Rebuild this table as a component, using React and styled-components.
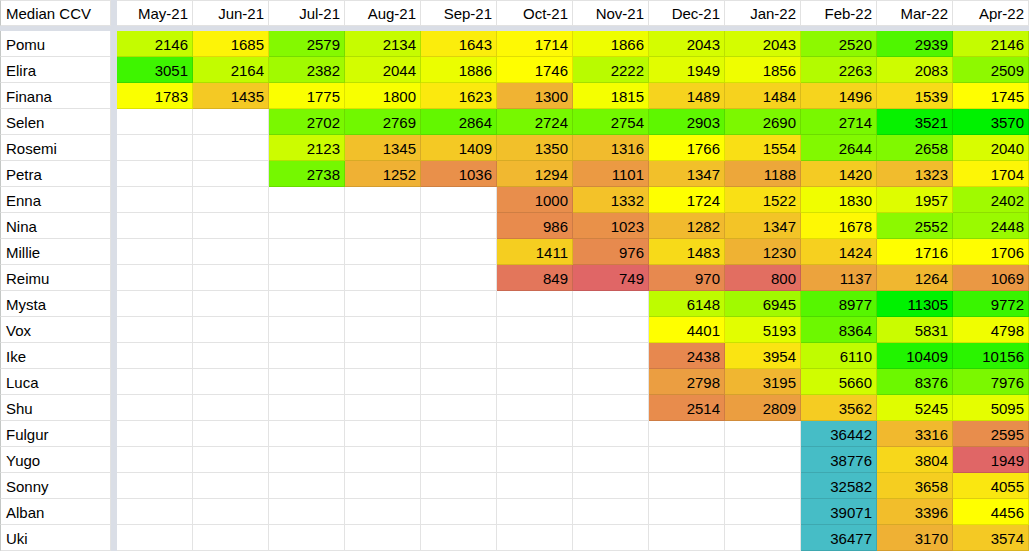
import React from "react";
import styled, { createGlobalStyle } from "styled-components";

const GlobalStyle = createGlobalStyle`
  html, body {
    margin: 0;
    padding: 0;
    background: #ffffff;
    overflow: hidden;
  }
  body {
    font-family: "Liberation Sans", Arial, sans-serif;
  }
`;

const MONTHS = [
  "May-21", "Jun-21", "Jul-21", "Aug-21", "Sep-21", "Oct-21",
  "Nov-21", "Dec-21", "Jan-22", "Feb-22", "Mar-22", "Apr-22",
];

// each wave has its own colour scale: value at red, at yellow, at green
const SCALES = {
  w1: [850, 1750, 3470],
  w2: [760, 1760, 3570],
  w3: [749, 1720, 3560],
  w4: [1880, 4401, 11305],
  w5: [1949, 4456, 9000],
};

const ROWS = [
  { name: "Pomu", wave: "w1", start: 0, values: [2146, 1685, 2579, 2134, 1643, 1714, 1866, 2043, 2043, 2520, 2939, 2146] },
  { name: "Elira", wave: "w1", start: 0, values: [3051, 2164, 2382, 2044, 1886, 1746, 2222, 1949, 1856, 2263, 2083, 2509] },
  { name: "Finana", wave: "w1", start: 0, values: [1783, 1435, 1775, 1800, 1623, 1300, 1815, 1489, 1484, 1496, 1539, 1745] },
  { name: "Selen", wave: "w2", start: 2, values: [2702, 2769, 2864, 2724, 2754, 2903, 2690, 2714, 3521, 3570] },
  { name: "Rosemi", wave: "w2", start: 2, values: [2123, 1345, 1409, 1350, 1316, 1766, 1554, 2644, 2658, 2040] },
  { name: "Petra", wave: "w2", start: 2, values: [2738, 1252, 1036, 1294, 1101, 1347, 1188, 1420, 1323, 1704] },
  { name: "Enna", wave: "w3", start: 5, values: [1000, 1332, 1724, 1522, 1830, 1957, 2402] },
  { name: "Nina", wave: "w3", start: 5, values: [986, 1023, 1282, 1347, 1678, 2552, 2448] },
  { name: "Millie", wave: "w3", start: 5, values: [1411, 976, 1483, 1230, 1424, 1716, 1706] },
  { name: "Reimu", wave: "w3", start: 5, values: [849, 749, 970, 800, 1137, 1264, 1069] },
  { name: "Mysta", wave: "w4", start: 7, values: [6148, 6945, 8977, 11305, 9772] },
  { name: "Vox", wave: "w4", start: 7, values: [4401, 5193, 8364, 5831, 4798] },
  { name: "Ike", wave: "w4", start: 7, values: [2438, 3954, 6110, 10409, 10156] },
  { name: "Luca", wave: "w4", start: 7, values: [2798, 3195, 5660, 8376, 7976] },
  { name: "Shu", wave: "w4", start: 7, values: [2514, 2809, 3562, 5245, 5095] },
  { name: "Fulgur", wave: "w5", start: 9, debut: true, values: [36442, 3316, 2595] },
  { name: "Yugo", wave: "w5", start: 9, debut: true, values: [38776, 3804, 1949] },
  { name: "Sonny", wave: "w5", start: 9, debut: true, values: [32582, 3658, 4055] },
  { name: "Alban", wave: "w5", start: 9, debut: true, values: [39071, 3396, 4456] },
  { name: "Uki", wave: "w5", start: 9, debut: true, values: [36477, 3170, 3574] },
];

const RED = [224, 102, 102];
const YELLOW = [255, 255, 0];
const GREEN = [0, 242, 0];
const TEAL = "#46bdc6";

const lerp = (a, b, t) => a.map((v, i) => Math.round(v + (b[i] - v) * t));

function heat(value, wave) {
  const [lo, mid, hi] = SCALES[wave];
  let rgb;
  if (value <= mid) {
    const t = Math.max(0, (value - lo) / (mid - lo));
    rgb = lerp(RED, YELLOW, t);
  } else {
    const t = Math.min(1, (value - mid) / (hi - mid));
    rgb = lerp(YELLOW, GREEN, t);
  }
  return `rgb(${rgb.join(",")})`;
}

export default function App() {
  return (
    <>
      <GlobalStyle />
      <Sheet>
        <FrozenCol />
        <FrozenRow />
        <NameCell $header>Median CCV</NameCell>
        {MONTHS.map((m) => (
          <HeadCell key={m}>{m}</HeadCell>
        ))}
        {ROWS.map((row) => (
          <React.Fragment key={row.name}>
            <NameCell>{row.name}</NameCell>
            {MONTHS.map((m, i) => {
              const idx = i - row.start;
              if (idx < 0) return <ValueCell key={m} />;
              const v = row.values[idx];
              const bg = row.debut && idx === 0 ? TEAL : heat(v, row.wave);
              return (
                <ValueCell key={m} style={{ background: bg }}>
                  {v}
                </ValueCell>
              );
            })}
          </React.Fragment>
        ))}
      </Sheet>
    </>
  );
}

const Sheet = styled.div`
  display: grid;
  grid-template-columns: 111px 6px repeat(12, 76px);
  grid-template-rows: 26px 5px repeat(20, 26px);
  width: 1029px;
  height: 551px;
  overflow: hidden;
  font-size: 15px;
  color: #000;
`;

const FrozenCol = styled.div`
  grid-column: 2;
  grid-row: 1 / -1;
  background: #dadee6;
`;

const FrozenRow = styled.div`
  grid-column: 1 / -1;
  grid-row: 2;
  background: #dadee6;
`;

const Cell = styled.div`
  box-sizing: border-box;
  display: flex;
  align-items: flex-end;
  padding-bottom: 3px;
  border-right: 1px solid rgba(0, 0, 0, 0.11);
  border-bottom: 1px solid rgba(0, 0, 0, 0.11);
  white-space: nowrap;
  overflow: hidden;
  line-height: 17px;
`;

const NameCell = styled(Cell)`
  grid-column: 1;
  justify-content: flex-start;
  padding-left: 5px;
  border-left: 1px solid #c4c7c5;
  border-top: ${(p) => (p.$header ? "1px solid #e2e2e2" : "none")};
  background: #ffffff;
`;

const HeadCell = styled(Cell)`
  justify-content: flex-end;
  padding-right: 4px;
  border-top: 1px solid #e2e2e2;
  background: #ffffff;
`;

const ValueCell = styled(Cell)`
  justify-content: flex-end;
  padding-right: 4px;
  background: #ffffff;
`;
